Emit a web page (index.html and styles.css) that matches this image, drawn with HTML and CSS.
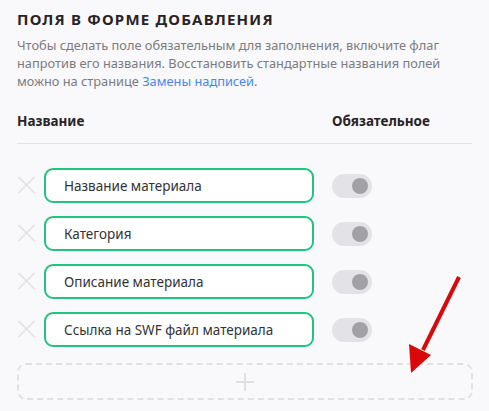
FILE: index.html
```html
<!DOCTYPE html>
<html lang="ru">
<head>
<meta charset="utf-8">
<link rel="stylesheet" href="styles.css">
</head>
<body>
<div class="page">
  <h2 class="title">ПОЛЯ В ФОРМЕ ДОБАВЛЕНИЯ</h2>
  <p class="desc">Чтобы сделать поле обязательным для заполнения, включите флаг напротив его названия. Восстановить стандартные названия полей можно на странице <a href="#" class="link">Замены надписей</a>.</p>
  <div class="head">
    <span class="h-name">Название</span>
    <span class="h-req">Обязательное</span>
  </div>
  <div class="rows">
    <div class="row">
      <span class="del"></span>
      <div class="field">Название материала</div>
      <span class="toggle"><span class="knob"></span></span>
    </div>
    <div class="row">
      <span class="del"></span>
      <div class="field">Категория</div>
      <span class="toggle"><span class="knob"></span></span>
    </div>
    <div class="row">
      <span class="del"></span>
      <div class="field">Описание материала</div>
      <span class="toggle"><span class="knob"></span></span>
    </div>
    <div class="row">
      <span class="del"></span>
      <div class="field">Ссылка на SWF файл материала</div>
      <span class="toggle"><span class="knob"></span></span>
    </div>
  </div>
  <div class="add"><span class="plus"></span></div>
  <svg class="arrow" width="489" height="411" viewBox="0 0 489 411">
    <line x1="459" y1="277" x2="423" y2="350" stroke="#d9090b" stroke-width="4"/>
    <polygon points="411,373 409,344 431,355" fill="#d9090b"/>
  </svg>
</div>
</body>
</html>
```
FILE: styles.css
```css
html, body { margin: 0; padding: 0; }
body {
  background: #f9f9fb;
  font-family: "Noto Sans", "Open Sans", sans-serif;
  color: #333;
  width: 489px;
  height: 411px;
  overflow: hidden;
}
.page {
  position: relative;
  padding: 10px 17px 0 17px;
}
.title {
  margin: 0;
  font-size: 15px;
  font-weight: 700;
  letter-spacing: 1.2px;
  color: #2a2326;
  line-height: 18px;
}
.desc {
  margin: 8px 0 0 0;
  font-size: 12.8px;
  line-height: 18px;
  color: #7b7b80;
}
.link { color: #4f86ea; text-decoration: none; }
.head {
  display: flex;
  margin-top: 22px;
  padding-bottom: 13px;
  border-bottom: 1px solid #e2e2e8;
  font-size: 13.5px;
  font-weight: 700;
  color: #2a2326;
  line-height: 18px;
}
.h-name { width: 315px; }
.rows {
  display: flex;
  flex-direction: column;
  gap: 13px;
  margin-top: 24px;
}
.row {
  display: flex;
  align-items: center;
  height: 35px;
}
.del {
  position: relative;
  width: 19px;
  height: 19px;
  margin-right: 8px;
}
.del::before, .del::after {
  content: "";
  position: absolute;
  left: -2px;
  top: 8px;
  width: 23px;
  height: 2px;
  background: #e6e6e8;
  transform: rotate(45deg);
}
.del::after { transform: rotate(-45deg); }
.field {
  box-sizing: border-box;
  width: 270px;
  height: 35px;
  border: 2px solid #1ec47f;
  border-radius: 9px;
  background: #fff;
  padding-left: 18px;
  display: flex;
  align-items: center;
  font-size: 13.5px;
  color: #333;
}
.toggle {
  box-sizing: border-box;
  width: 40px;
  height: 24px;
  margin-left: 18px;
  border-radius: 12px;
  background: #e3e3e7;
  display: flex;
  align-items: center;
  justify-content: flex-end;
  padding-right: 4px;
}
.knob {
  width: 16px;
  height: 16px;
  border-radius: 50%;
  background: #a2a2a6;
}
.add {
  box-sizing: border-box;
  margin-top: 16px;
  width: 456px;
  height: 37px;
  border: 2px dashed #e1e1e5;
  border-radius: 9px;
  display: flex;
  align-items: center;
  justify-content: center;
}
.plus {
  position: relative;
  width: 18px;
  height: 18px;
}
.plus::before, .plus::after {
  content: "";
  position: absolute;
  background: #e0e0e3;
}
.plus::before { left: 8px; top: 0; width: 2px; height: 18px; }
.plus::after { top: 8px; left: 0; height: 2px; width: 18px; }
.arrow {
  position: absolute;
  left: 0;
  top: 0;
  pointer-events: none;
}
```
